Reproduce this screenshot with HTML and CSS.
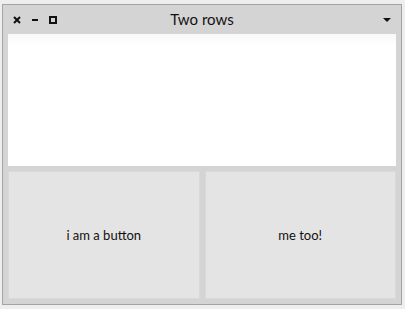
FILE: index.html
```html
<!DOCTYPE html>
<html lang="en">
<head>
    <meta charset="UTF-8">
    <meta name="viewport" content="width=device-width, initial-scale=1.0">
    <title>Two rows</title>
    <link rel="stylesheet" href="styles.css">
</head>
<body>
    <div class="window">
        <div class="titlebar">
            <div class="controls">
                <svg class="ctl" width="8" height="8" viewBox="0 0 8 8"><path d="M1 1 L7 7 M7 1 L1 7" stroke="#111" stroke-width="2"/></svg>
                <svg class="ctl" width="6" height="8" viewBox="0 0 6 8"><rect x="0" y="3" width="6" height="2" fill="#111"/></svg>
                <svg class="ctl" width="8" height="8" viewBox="0 0 8 8"><rect x="1" y="1" width="6" height="6" fill="none" stroke="#111" stroke-width="2"/></svg>
            </div>
            <div class="title">Two rows</div>
            <svg class="menu" width="8" height="5" viewBox="0 0 8 5"><path d="M0 0 L8 0 L4 4 Z" fill="#111"/></svg>
        </div>
        <div class="body">
            <div class="panel"></div>
            <div class="row">
                <button class="btn">i am a button</button>
                <button class="btn">me too!</button>
            </div>
        </div>
    </div>
</body>
</html>
```

FILE: styles.css
```css
body {
    margin: 0;
    background-color: #eeeeee;
    font-family: 'Lato', 'Open Sans', sans-serif;
}
.window {
    margin: 4px 0 0 2px;
    width: 398px;
    height: 299px;
    border: 1px solid #a3a3a3;
    background-color: #d4d4d4;
    display: flex;
    flex-direction: column;
}
.titlebar {
    height: 29px;
    display: flex;
    align-items: center;
    position: relative;
}
.controls {
    display: flex;
    align-items: center;
    gap: 11px;
    padding-left: 10px;
    margin-top: 1px;
}
.ctl {
    display: block;
}
.title {
    position: absolute;
    left: 0;
    right: 0;
    text-align: center;
    font-size: 15px;
    color: #111;
    top: 5px;
}
.menu {
    margin-left: auto;
    margin-right: 10px;
    margin-top: 1px;
}
.body {
    flex: 1;
    display: flex;
    flex-direction: column;
    gap: 5px;
    padding: 0 5px 5px 5px;
}
.panel {
    height: 132px;
    background: linear-gradient(#f7f8fa, #ffffff 12px);
}
.row {
    flex: 1;
    display: flex;
    gap: 5px;
}
.btn {
    flex: 1;
    background-color: #e4e4e4;
    border: 1px solid #d9d9d9;
    font-family: inherit;
    font-size: 13px;
    color: #111;
    padding: 0;
}
```
